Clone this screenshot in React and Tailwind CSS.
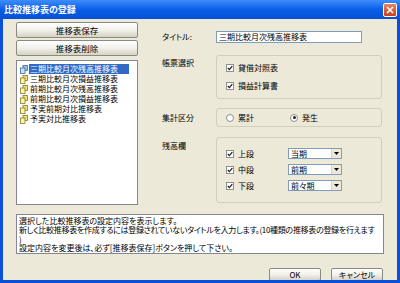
const items = [
  '三期比較月次残高推移表',
  '三期比較月次損益推移表',
  '前期比較月次残高推移表',
  '前期比較月次損益推移表',
  '予実前期対比推移表',
  '予実対比推移表',
]

function DocIcon({ selected }) {
  return (
    <svg width="8" height="9" viewBox="0 0 8 9" className="flex-shrink-0">
      <rect x="3" y="0.5" width="4.5" height="5" fill={selected ? '#9cc3e6' : '#f3e27a'} stroke={selected ? '#3b6aa8' : '#8a7a20'} strokeWidth="0.8" />
      <rect x="0.5" y="3" width="4.5" height="5.5" fill={selected ? '#cfe2f5' : '#fbf3b0'} stroke={selected ? '#3b6aa8' : '#8a7a20'} strokeWidth="0.8" />
    </svg>
  )
}

function Check() {
  return (
    <span className="w-[8px] h-[8px] border border-[#8e8f8f] bg-white flex items-center justify-center flex-shrink-0">
      <svg width="6" height="6" viewBox="0 0 6 6">
        <polyline points="0.8,3 2.4,4.6 5.3,1.2" fill="none" stroke="#222" strokeWidth="1.3" />
      </svg>
    </span>
  )
}

function Radio({ on }) {
  return (
    <span className="w-[8px] h-[8px] rounded-full border border-[#8e8f8f] bg-white flex items-center justify-center flex-shrink-0">
      {on && <span className="w-[3px] h-[3px] rounded-full bg-[#222]" />}
    </span>
  )
}

function Select({ value }) {
  return (
    <div className="w-[54px] h-[11px] border border-[#7f9db9] bg-white flex items-center">
      <span className="flex-1 pl-[2px] text-[8px] leading-none">{value}</span>
      <span className="w-[10px] h-full bg-[#ece9d8] border-l border-[#d6d3c6] flex items-center justify-center">
        <svg width="5" height="3" viewBox="0 0 5 3"><polygon points="0,0 5,0 2.5,3" fill="#000" /></svg>
      </span>
    </div>
  )
}

function XpButton({ children, className }) {
  return (
    <div className={`border border-[#8a8a80] rounded-[2px] bg-gradient-to-b from-[#ffffff] via-[#f2f1ea] to-[#d6d3c6] flex items-center justify-center leading-none ${className}`}>
      {children}
    </div>
  )
}

export default function App() {
  return (
    <div className="w-[400px] h-[283px] bg-[#0a4fd6] flex flex-col text-black overflow-hidden font-['Noto_Sans_CJK_JP',sans-serif] [font-feature-settings:'palt']">
      {/* title bar */}
      <div className="h-[19px] flex-shrink-0 flex items-center justify-between pl-[4px] pr-[3px] bg-gradient-to-b from-[#3d8dfd] via-[#0a5ee8] to-[#0651d6]">
        <span className="text-white text-[9px] font-bold leading-none">比較推移表の登録</span>
        <span className="w-[14px] h-[14px] rounded-[2px] border border-white bg-gradient-to-b from-[#e8825e] to-[#c8401c] flex items-center justify-center">
          <svg width="8" height="8" viewBox="0 0 8 8"><path d="M1 1 L7 7 M7 1 L1 7" stroke="#fff" strokeWidth="1.6" /></svg>
        </span>
      </div>

      <div className="flex-1 min-h-0 mx-[3px] mb-[3px] bg-[#ece9d8] flex flex-col overflow-hidden">
        <div className="flex pt-[3px] flex-shrink-0">
          {/* left column */}
          <div className="w-[122px] ml-[13px] flex flex-col gap-[2px]">
            <XpButton className="h-[16px] text-[8.5px]">推移表保存</XpButton>
            <XpButton className="h-[16px] text-[8.5px]">推移表削除</XpButton>
            <div className="mt-[2px] h-[145px] border border-[#828790] bg-white pt-[3px] pl-[3px] flex flex-col overflow-hidden">
              {items.map((t, i) => (
                <div key={t} className="h-[10px] flex items-center gap-[1px]">
                  <DocIcon selected={i === 0} />
                  <span className={`h-[10px] text-[8px] leading-[10px] px-[1px] ${i === 0 ? 'bg-[#316ac5] text-white w-[100px]' : ''}`}>{t}</span>
                </div>
              ))}
            </div>
          </div>

          {/* right column */}
          <div className="ml-[24px] flex flex-col text-[8px] leading-none">
            <div className="flex items-center mt-[9px] h-[12px]">
              <span className="w-[54px]">タイトル:</span>
              <div className="w-[146px] h-[12px] border border-[#7f9db9] bg-white flex items-center pl-[2px]">三期比較月次残高推移表</div>
            </div>

            <div className="flex mt-[12px]">
              <span className="w-[54px] pt-[4px]">帳票選択</span>
              <div className="w-[166px] h-[44px] border border-[#d0cebf] rounded-[3px] flex flex-col justify-center gap-[8px] pl-[9px]">
                <div className="h-[10px] flex items-center gap-[4px]"><Check />貸借対照表</div>
                <div className="h-[10px] flex items-center gap-[4px]"><Check />損益計算書</div>
              </div>
            </div>

            <div className="flex items-center mt-[9px]">
              <span className="w-[54px]">集計区分</span>
              <div className="w-[166px] h-[19px] border border-[#d0cebf] rounded-[3px] flex items-center pl-[9px]">
                <div className="w-[64px] flex items-center gap-[4px]"><Radio />累計</div>
                <div className="flex items-center gap-[4px]"><Radio on />発生</div>
              </div>
            </div>

            <div className="flex mt-[10px]">
              <span className="w-[54px] pt-[5px]">残高欄</span>
              <div className="w-[166px] h-[66px] border border-[#d0cebf] rounded-[3px] flex flex-col pt-[10px] gap-[5px] pl-[9px]">
                {[['上段', '当期'], ['中段', '前期'], ['下段', '前々期']].map(([a, b]) => (
                  <div key={a} className="h-[11px] flex items-center">
                    <div className="w-[62px] flex items-center gap-[4px]"><Check />{a}</div>
                    <Select value={b} />
                  </div>
                ))}
              </div>
            </div>
          </div>
        </div>

        {/* description */}
        <div className="mx-[13px] mt-[9px] h-[40px] flex-shrink-0 border border-[#828790] bg-white px-[2px] pt-[1px] text-[8px] leading-[9px] overflow-hidden whitespace-nowrap">
          <div className="h-[9px]">選択した比較推移表の設定内容を表示します。</div>
          <div className="h-[9px] tracking-[-0.3px]">新しく比較推移表を作成するには登録されていないタイトルを入力します。(10種類の推移表の登録を行えます</div>
          <div className="h-[9px]">)</div>
          <div className="h-[9px]">設定内容を変更後は、必ず[推移表保存]ボタンを押して下さい。</div>
        </div>

        {/* footer buttons */}
        <div className="flex justify-end gap-[10px] mr-[14px] mt-[14px] flex-shrink-0">
          <XpButton className="w-[52px] h-[13px] text-[8px]">OK</XpButton>
          <XpButton className="w-[52px] h-[13px] text-[8px]">キャンセル</XpButton>
        </div>
      </div>
    </div>
  )
}
